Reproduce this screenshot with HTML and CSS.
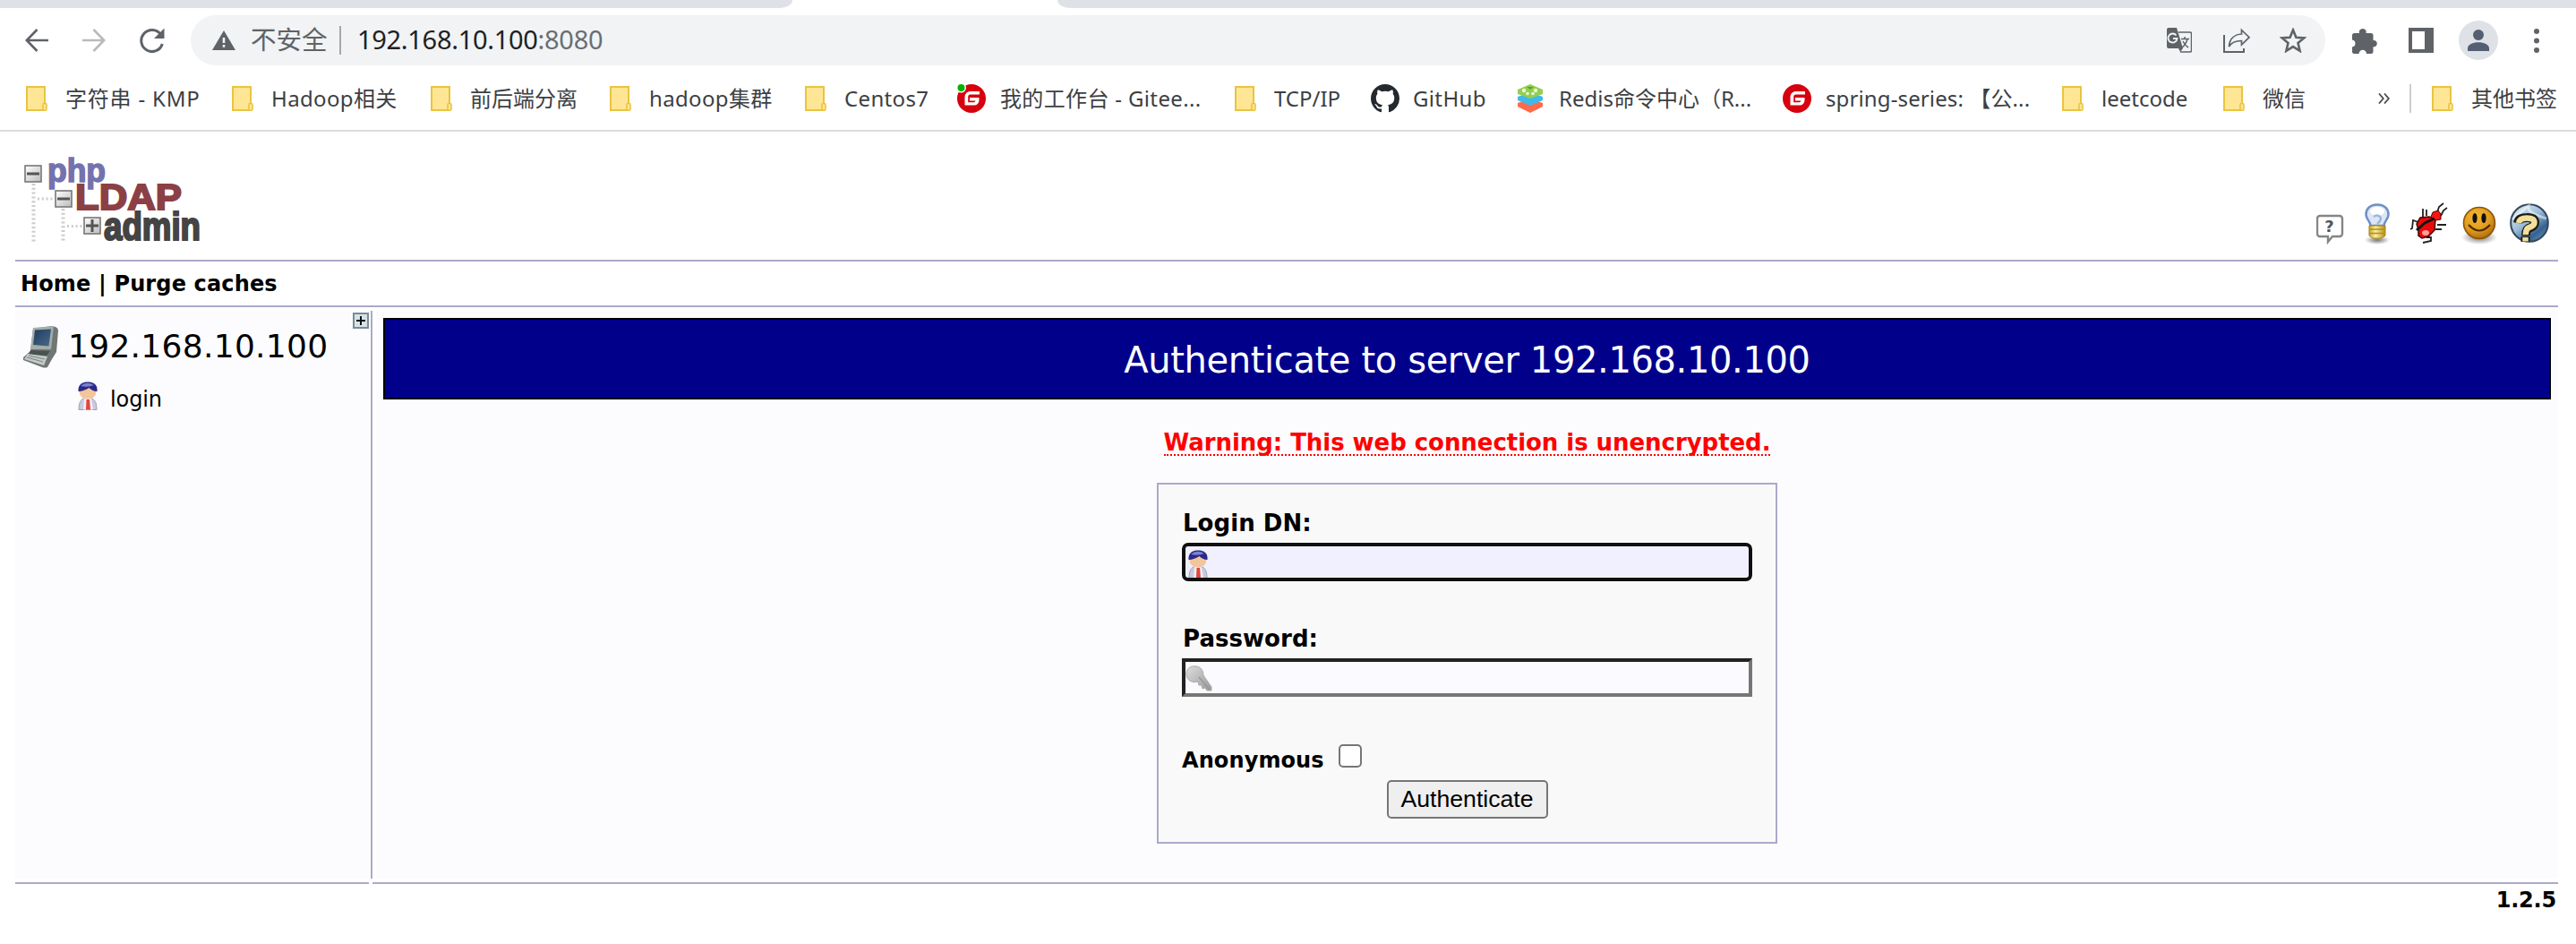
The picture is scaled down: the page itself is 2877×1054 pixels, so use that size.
FILE: index.html
```
<!DOCTYPE html>
<html lang="zh-CN">
<head>
<meta charset="utf-8">
<title>phpLDAPadmin</title>
<link rel="stylesheet" href="styles.css">
</head>
<body>
<svg class="defs" width="0" height="0">
  <defs>
    <symbol id="folder" viewBox="0 0 24 28">
      <path d="M1 1h20v26H1z" fill="#ffe694" stroke="#e9c442" stroke-width="2"/>
      <rect x="19" y="19.500" width="4" height="7.700" rx="1.500" fill="#ffe694" stroke="#e9c442" stroke-width="1.600"/>
    </symbol>
    <symbol id="gitee" viewBox="0 0 32 32">
      <circle cx="16" cy="16" r="16" fill="#d7000f"/>
      <path d="M25 8H14.500A6 6 0 0 0 8.500 14v9.500H19a5.500 5.500 0 0 0 5.500-5.500v-3H14v3.500h6.500a2 2 0 0 1-2 1.700h-6.300V14a2.500 2.500 0 0 1 2.500-2.500H25z" fill="#fff"/>
    </symbol>
    <symbol id="user" viewBox="0 0 24 34">
      <path d="M2 32.500c0-8 2-12 7-13h6c5 1 7 5 7 13z" fill="#c9c9dc" stroke="#a0a0b4"/>
      <path d="M8 20h8l2 12.500H7z" fill="#eeeef6"/>
      <path d="M10.500 21H14l1 11.500h-5z" fill="#e4443b"/>
      <ellipse cx="12" cy="12.500" rx="9.500" ry="8" fill="#f3c59b"/>
      <path d="M1.500 12C1 4 6 1.500 12 1.500S23.500 4 22.500 12c-4 0-7-2-9-4-3 2-8 4-12 4z" fill="#29298c"/>
      <path d="M4 6q6-6 15-1-7 3-15 1z" fill="#7d82cd"/>
    </symbol>
    <linearGradient id="box" x1="0" y1="0" x2="1" y2="1"><stop offset="0" stop-color="#fff"/><stop offset="1" stop-color="#bbb"/></linearGradient>
    <linearGradient id="screen" x1="0" y1="0" x2="1" y2="1"><stop offset="0" stop-color="#213c5c"/><stop offset="1" stop-color="#48698c"/></linearGradient>
    <radialGradient id="face" cx=".4" cy=".3" r=".75"><stop offset="0" stop-color="#f7b52e"/><stop offset=".6" stop-color="#e09a1e"/><stop offset="1" stop-color="#a8660a"/></radialGradient>
    <linearGradient id="globe" x1=".1" y1="0" x2=".9" y2="1"><stop offset="0" stop-color="#e4eef6"/><stop offset=".45" stop-color="#9dbdd8"/><stop offset=".75" stop-color="#34618f"/><stop offset="1" stop-color="#6c98c0"/></linearGradient>
    <linearGradient id="gold" x1="0" y1="0" x2="1" y2="0"><stop offset="0" stop-color="#c9a52a"/><stop offset=".4" stop-color="#fdf0a0"/><stop offset="1" stop-color="#b58e17"/></linearGradient>
    <radialGradient id="shade"><stop offset="0" stop-color="#777"/><stop offset="1" stop-color="#777" stop-opacity="0"/></radialGradient>
    <linearGradient id="steel" x1="0" y1="0" x2="1" y2="1"><stop offset="0" stop-color="#ddd"/><stop offset="1" stop-color="#999"/></linearGradient>
  </defs>
</svg>

<div class="browser">
  <div class="tabstrip"><span class="tabs-left"></span><span class="tabs-right"></span></div>
  <div class="toolbar">
    <div class="nav">
      <svg width="26" height="26" viewBox="0 0 26 26" fill="none" stroke="#5f6368" stroke-width="2.600"><path d="M26 13H2M13.500 1L1.800 13l11.700 12"/></svg>
      <svg width="26" height="26" viewBox="0 0 26 26" fill="none" stroke="#bababc" stroke-width="2.600"><path d="M0 13h24M12.500 1l11.700 12-11.700 12"/></svg>
      <svg width="28" height="28" viewBox="0 0 28 28"><path d="M23.500 7.500A12 12 0 1 0 25.300 18" fill="none" stroke="#5f6368" stroke-width="3"/><path d="M27.500 .5v11.500H16z" fill="#5f6368"/></svg>
    </div>
    <div class="omnibox">
      <svg class="warn" width="26" height="22" viewBox="0 0 26 22"><path d="M13 0l13 22H0z" fill="#5f6368"/><path d="M11.700 8h2.600v6h-2.600zM11.700 16h2.600v2.800h-2.600z" fill="#f1f3f4"/></svg>
      <span class="insecure">不安全</span>
      <span class="divider"></span>
      <span class="url">192.168.10.100<span class="port">:8080</span></span>
      <div class="actions">
        <svg width="28" height="28" viewBox="0 0 28 28"><path d="M13 5h13a1.500 1.500 0 0 1 1.500 1.500v19A1.500 1.500 0 0 1 26 27H15" fill="none" stroke="#5f6368" stroke-width="1.500"/><path d="M2 0h9l7 23-3 4-2-4H2a2 2 0 0 1-2-2V2a2 2 0 0 1 2-2z" fill="#5f6368"/><path d="M10.500 8.500A5 5 0 1 0 11.500 12H7" fill="none" stroke="#f1f3f4" stroke-width="1.900"/><path d="M16 12.500h9M20 10v2.500M23 12.500q-1.500 6-6 9.500M18 15q2 4.500 6 7" fill="none" stroke="#5f6368" stroke-width="1.500"/></svg>
        <svg width="30" height="28" viewBox="0 0 30 28" fill="none" stroke="#5f6368"><path d="M1 8v19h22v-4" stroke-width="2"/><path d="M20.500 2.500L29 10.700 20.500 19v-4.500C14 14.500 9 16.500 6.500 21 7 13 12 7.500 20.500 7z" stroke-width="1.700"/></svg>
        <svg width="30" height="28" viewBox="0 0 30 28"><path d="M15 2.500l3.400 8.200 8.900.7-6.800 5.700 2.100 8.700L15 21.100l-7.600 4.700 2.100-8.700-6.800-5.700 8.900-.7z" fill="none" stroke="#5f6368" stroke-width="2.600"/></svg>
      </div>
    </div>
    <div class="tools">
      <svg width="29" height="29" viewBox="0 0 29 29" fill="#5f6368"><path d="M2.500 6H8a4 3.800 0 1 1 7.500 0H21a2.500 2.500 0 0 1 2.500 2.500V14a3.700 3.700 0 1 1 0 7.300v5.200A2.500 2.500 0 0 1 21 29h-5a4.200 4.200 0 0 0-8.400 0H2.500A2.500 2.500 0 0 1 0 26.500v-5a4.100 4.100 0 0 0 0-8.100V8.500A2.500 2.500 0 0 1 2.500 6z"/></svg>
      <svg width="28" height="28" viewBox="0 0 28 28"><path d="M0 0h28v28H0z" fill="#5f6368"/><path d="M4 4h14v20H4z" fill="#fff"/></svg>
      <svg width="44" height="44" viewBox="0 0 44 44"><circle cx="22" cy="22" r="22" fill="#dee1e6"/><circle cx="22" cy="16" r="6" fill="#555f73"/><path d="M10 34v-3c0-9 24-9 24 0v3z" fill="#555f73"/></svg>
      <svg width="6" height="27" viewBox="0 0 6 27" fill="#5f6368"><circle cx="3" cy="3" r="3"/><circle cx="3" cy="13.500" r="3"/><circle cx="3" cy="24" r="3"/></svg>
    </div>
  </div>
  <div class="bookmarks">
    <div class="mark f"><svg width="24" height="28"><use href="#folder"/></svg><span class="s7">字符串 - KMP</span></div>
    <div class="mark f"><svg width="24" height="28"><use href="#folder"/></svg><span class="s3">Hadoop相关</span></div>
    <div class="mark f"><svg width="24" height="28"><use href="#folder"/></svg><span>前后端分离</span></div>
    <div class="mark f"><svg width="24" height="28"><use href="#folder"/></svg><span class="s3">hadoop集群</span></div>
    <div class="mark f"><svg width="24" height="28"><use href="#folder"/></svg><span class="s3">Centos7</span></div>
    <div class="mark"><svg width="32" height="32"><use href="#gitee"/><circle cx="4.500" cy="4" r="5.500" fill="#fff"/><circle cx="4.500" cy="4" r="4" fill="#00b400"/></svg><span class="s3">我的工作台 - Gitee...</span></div>
    <div class="mark f"><svg width="24" height="28"><use href="#folder"/></svg><span>TCP/IP</span></div>
    <div class="mark g"><svg width="32" height="32" viewBox="0 0 16 16"><path fill="#24292f" d="M8 0C3.580 0 0 3.580 0 8c0 3.540 2.290 6.530 5.470 7.590.4.070.55-.17.55-.38 0-.19-.01-.82-.01-1.490-2.010.37-2.530-.49-2.690-.94-.09-.23-.48-.94-.82-1.130-.28-.15-.68-.52-.01-.53.63-.01 1.080.58 1.230.82.72 1.210 1.870.87 2.330.66.070-.52.28-.87.51-1.070-1.780-.2-3.640-.89-3.640-3.950 0-.87.31-1.590.82-2.150-.08-.2-.36-1.020.08-2.120 0 0 .67-.21 2.200.82.64-.18 1.320-.27 2-.27s1.360.09 2 .27c1.530-1.040 2.200-.82 2.200-.82.44 1.100.16 1.920.08 2.120.51.56.82 1.270.82 2.150 0 3.070-1.870 3.750-3.650 3.950.29.25.54.73.54 1.480 0 1.070-.01 1.930-.01 2.200 0 .21.15.46.55.38A8.010 8.010 0 0 0 16 8c0-4.420-3.580-8-8-8z"/></svg><span class="s3">GitHub</span></div>
    <div class="mark r"><svg width="28" height="32" viewBox="0 0 28 32"><path d="M0 21l14-5 14 5v4l-14 7-14-7z" fill="#ff6b4a"/><path d="M0 14l14-5 14 5v4l-14 6-14-6z" fill="#41b8ea"/><path d="M0 6l14-6 14 6v5l-14 5-14-5z" fill="#91cf50"/><g fill="#eaf6d8"><circle cx="7" cy="7" r="2.200"/><circle cx="20" cy="7" r="2.200"/><circle cx="11" cy="10.500" r="1.800"/><circle cx="17" cy="10.500" r="1.800"/></g><path d="M10 3h8l-4 3z" fill="#5ea51e"/></svg><span>Redis命令中心（R...</span></div>
    <div class="mark"><svg width="32" height="32"><use href="#gitee"/></svg><span class="s1">spring-series: 【公...</span></div>
    <div class="mark f"><svg width="24" height="28"><use href="#folder"/></svg><span>leetcode</span></div>
    <div class="mark f"><svg width="24" height="28"><use href="#folder"/></svg><span>微信</span></div>
    <div class="more"><svg width="13" height="12" viewBox="0 0 13 12" fill="none" stroke="#4a4c50" stroke-width="1.800"><path d="M1 .5L5.800 6 1 11.500M7 .5L11.800 6 7 11.500"/></svg></div>
    <div class="sep"></div>
    <div class="mark f"><svg width="24" height="28"><use href="#folder"/></svg><span>其他书签</span></div>
  </div>
</div>

<div class="page">
  <header class="head">
    <svg class="logo" width="200" height="100" viewBox="0 0 200 100">
      <g stroke="#ccc" stroke-width="4" stroke-dasharray="2 2.800" fill="none"><path d="M10.500 32v66M43.500 60v38"/><path d="M15 49h17M48 79.500h17" stroke-width="3"/></g>
      <g fill="url(#box)" stroke="#777" stroke-width="1.600"><rect x="1" y="12" width="18" height="18"/><rect x="35" y="40" width="18" height="18"/><rect x="67" y="70" width="18" height="18"/></g>
      <path d="M3 21h14M37 49h14M69 79h14M76 72v14" stroke="#555" stroke-width="3"/>
      <text x="26" y="30" class="lg php" textLength="65" lengthAdjust="spacingAndGlyphs">php</text>
      <text x="57" y="61" class="lg ldap" textLength="119" lengthAdjust="spacingAndGlyphs">LDAP</text>
      <text x="89" y="95" class="lg admin" textLength="108" lengthAdjust="spacingAndGlyphs">admin</text>
    </svg>
    <div class="links">
      <svg class="i1" width="32" height="34" viewBox="0 0 32 34"><path d="M4 2h22a3 3 0 0 1 3 3v17a3 3 0 0 1-3 3H18l-5 6v-6H4a3 3 0 0 1-3-3V5a3 3 0 0 1 3-3z" fill="#fff" stroke="#858585" stroke-width="2.400"/><text x="14.500" y="19.500" class="q" font-size="18" text-anchor="middle" fill="#555">?</text></svg>
      <svg class="i2" width="28" height="46" viewBox="0 0 28 46"><ellipse cx="14" cy="41" rx="14" ry="5" fill="url(#shade)"/><path d="M14 1.500C5 1.500 1.500 7 1.500 12.500 1.500 18 6 19 6.500 25h15C22 19 26.500 18 26.500 12.500S23 1.500 14 1.500z" fill="#dce6f5" stroke="#6d8fc4" stroke-width="2.500"/><ellipse cx="14" cy="9" rx="8" ry="5" fill="#fff"/><path d="M10 15q4-3 7 0t-3 8" fill="none" stroke="#9db5dc" stroke-width="2.500"/><path d="M5 25h18v11l-4 3H9l-4-3z" fill="url(#gold)" stroke="#a98514"/><path d="M5 29h18M5 33.500h18" stroke="#b5901c" stroke-width="1.500"/></svg>
      <svg class="i3" width="48" height="48" viewBox="0 0 48 48"><g fill="none" stroke="#222" stroke-width="1.800"><path d="M19 18V8M23 16V9M14 23l-6-2-1 9-2 1M35 12l2-6 5-4M39 16l3-6 4-3M35 26h10M33 31h7M23 40h5v4l-9 2"/></g><path d="M16 18l10-1 7 3-1 12-7 7-7 2-4-3v-7l-2-6z" fill="#e60a0a" stroke="#400" stroke-width="1.500"/><path d="M30 12l6-2 3 4v6l-6 1-5-4z" fill="#f51515" stroke="#500" stroke-width="1"/><path d="M12 32L21 24 32 19" stroke="#111" stroke-width="3" fill="none"/><ellipse cx="22" cy="35" rx="4" ry="3" fill="#ff9c9c"/></svg>
      <svg class="i4" width="40" height="44" viewBox="0 0 40 44"><ellipse cx="20" cy="36" rx="20" ry="8" fill="url(#shade)"/><circle cx="20" cy="20" r="17.500" fill="url(#face)" stroke="#8a5508" stroke-width="1.600"/><ellipse cx="15" cy="14.500" rx="2.600" ry="5.500" fill="#111"/><ellipse cx="25" cy="14.500" rx="2.600" ry="5.500" fill="#111"/><path d="M8 22q12 13 24 0" fill="none" stroke="#4d2d00" stroke-width="2.200"/></svg>
      <svg class="i5" width="44" height="46" viewBox="0 0 44 46"><circle cx="22" cy="22" r="20.800" fill="url(#globe)" stroke="#33485c" stroke-width="2"/><path d="M3 18q10-9 18-15-2 8 20 14" fill="none" stroke="#fff" stroke-opacity=".5" stroke-width="3"/><g fill="none" stroke-linejoin="round"><path d="M9 22q1-6 10-6 9-.5 9 5.500 0 4-7 6.500-3 2-3 8M17.500 37v6" stroke="#1c1c1c" stroke-width="10"/><path d="M10 22q1-5.500 9-5.500 8.500 0 8.500 5 0 3.500-7 6-2.800 2-2.800 7.500M17.500 38v4.500" stroke="#f2e09a" stroke-width="6.500"/></g></svg>
    </div>
  </header>
  <nav class="menu">Home | Purge caches</nav>
  <div class="columns">
    <aside class="tree">
      <div class="expand"><svg width="18" height="18" viewBox="0 0 18 18"><path d="M1 1h16v16H1z" fill="#d5e3e6" stroke="#7c8c8f" stroke-width="2"/><path d="M4 9h10M9 4v10" stroke="#111" stroke-width="2"/></svg></div>
      <div class="server">
        <svg width="42" height="48" viewBox="0 0 42 48"><path d="M12 4L33 1q7 1 7 5l-2 24-5 8-5 9q-3 1-6 0L1 39v-3l8-7z" fill="#6f7774"/><path d="M12 3l23-2-3 26-23 0z" fill="#a4ada9"/><path d="M14 5.500l18-1-2.500 19L12 22z" fill="url(#screen)"/><path d="M9 28l22 1-4 5-20-1z" fill="#49524f"/><path d="M6 32l22 3-4 10-22-7z" fill="#c3cbc8"/><path d="M7 34l18 4M5 36l18 5" stroke="#7e8784" stroke-width="1.200"/></svg>
        <span>192.168.10.100</span>
      </div>
      <div class="login"><svg width="24" height="34"><use href="#user"/></svg><span>login</span></div>
    </aside>
    <div class="rule"></div>
    <main class="body">
      <h1>Authenticate to server 192.168.10.100</h1>
      <div class="warning"><span>Warning: This web connection is unencrypted.</span></div>
      <form class="auth">
        <label class="lab">Login DN:</label>
        <div class="field focus"><svg width="24" height="34" viewBox="0 0 24 34"><use href="#user"/></svg></div>
        <label class="lab second">Password:</label>
        <div class="field"><svg width="30" height="29" viewBox="0 0 30 29"><path d="M9 1c6-1 11 3 11 10l9 13v4h-5l-2-3-3 1-1-4-3 0-1-4C7 20 1 16 1 10 1 5 4 1 9 1z" fill="url(#steel)" stroke="#aaa"/><path d="M15 13l12 14" stroke="#999" stroke-width="1.600"/></svg></div>
        <div class="anon"><span>Anonymous</span><i class="check"></i></div>
        <button type="button">Authenticate</button>
      </form>
    </main>
  </div>
  <div class="endrules"><i></i><i></i></div>
  <footer>1.2.5</footer>
</div>
</body>
</html>
```
FILE: styles.css
```
* { box-sizing: border-box; }
body { margin: 0; background: #fff; color: #000; font-family: "DejaVu Sans", sans-serif; font-size: 24px; }
svg { display: block; flex: none; }
.defs { position: absolute; }

/* browser chrome */
.browser { height: 147px; border-bottom: 2px solid #dcdcdc; font-family: "Noto Sans", "Noto Sans CJK SC", sans-serif; }
.tabstrip { height: 9px; display: flex; justify-content: space-between; }
.tabs-left { width: 885px; background: #dee1e6; border-bottom-right-radius: 14px 9px; }
.tabs-right { width: 1696px; background: #dee1e6; border-bottom-left-radius: 14px 9px; }
.toolbar { height: 72px; display: flex; align-items: center; padding-right: 41px; }
.nav { display: flex; gap: 38px; width: 213px; padding-left: 28px; align-items: center; }
.omnibox { width: 2384px; height: 56px; border-radius: 28px; background: #f1f3f4; display: flex; align-items: center; padding: 0 21px 0 24px; line-height: 52px; }
.insecure { margin-left: 17px; width: 99px; padding-bottom: 2px; font-size: 28.500px; color: #5f6368; }
.divider { width: 2px; height: 32px; margin-right: 18px; background: #a5a8ab; }
.url { font-size: 29px; letter-spacing: -.3px; color: #202124; padding-bottom: 2px; }
.port { color: #6a6e73; }
.actions { margin-left: auto; display: flex; gap: 35px; }
.actions svg:nth-child(2) { margin-right: -2px; }
.tools { flex: 1; display: flex; align-items: center; padding-left: 30px; }
.tools svg:nth-child(2) { margin-left: 34px; }
.tools svg:nth-child(3) { margin-left: 28px; }
.tools svg:nth-child(4) { margin-left: auto; }
.bookmarks { height: 57px; padding-left: 29px; display: grid; align-items: center; color: #3c4043; grid-template-columns: 230px 222px 200px 218px 170px 310px 152px 164px 296px 312px 180px 173px 35px 25px auto; }
.mark { display: flex; align-items: center; gap: 16px; white-space: nowrap; line-height: 40px; }
.mark.f { gap: 20px; }
.mark.g { gap: 15px; }
.mark.r { gap: 18px; }
.s7 { letter-spacing: .8px; }
.s3 { letter-spacing: .35px; }
.s1 { letter-spacing: .12px; }
.sep { width: 2px; height: 32px; background: #cbcdd0; }

/* application */
.page { padding: 0 20px 0 17px; }
.head { height: 145px; border-bottom: 2px solid #aaaacc; display: flex; justify-content: space-between; align-items: flex-end; padding: 0 10px 17px 10px; }
.lg { font-family: "Liberation Sans", sans-serif; font-weight: bold; }
.logo { overflow: visible; }
.php { font-size: 36px; fill: #7373ad; stroke: #7373ad; stroke-width: 1.500; }
.ldap { font-size: 41px; fill: #8b4045; stroke: #8b4045; stroke-width: 2; }
.admin { font-size: 44px; fill: #444; stroke: #444; stroke-width: 2.200; }
.q { font-family: "DejaVu Sans", sans-serif; font-weight: bold; }
.links { display: flex; align-items: flex-end; }
.i2 { margin-left: 22px; }
.i3 { margin-left: 18px; }
.i4 { margin-left: 14px; }
.i5 { margin-left: 14px; }
.menu { height: 51px; border-bottom: 2px solid #aaaacc; padding-left: 6px; font-weight: bold; line-height: 51px; letter-spacing: .15px; }
.columns { margin-top: 4px; height: 634px; display: grid; grid-template-columns: 395px 2px 2437px; column-gap: 2px; }
.rule { background: #aaaacc; }
.tree, .body { background: #fcfcfe; }
.body { margin-left: 2px; margin-right: -2px; }
.expand { display: flex; justify-content: flex-end; padding-top: 2px; height: 16px; }
.server { display: flex; align-items: center; gap: 17px; padding-left: 8px; height: 48px; font-size: 36px; letter-spacing: .3px; }
.server svg { margin-right: -8px; }
.server span { padding-bottom: 2px; }
.login { display: flex; align-items: center; gap: 13px; margin-top: 13px; padding-left: 69px; }
.login span { padding-top: 8px; letter-spacing: -.1px; }
.body { padding: 8px 8px 0; }
h1 { margin: 0; height: 91px; border: 2px solid #000; background: #00008b; color: #fff; text-align: center; font-size: 40px; font-weight: normal; line-height: 91px; letter-spacing: -.38px; }
.warning { text-align: center; height: 93px; padding-top: 34px; font-size: 26px; font-weight: bold; color: #f00; line-height: 29px; letter-spacing: -.05px; }
.warning span { display: inline-block; height: 29px; border-bottom: 2px dotted #f00; }
.auth { position: relative; width: 693px; height: 403px; margin: 0 auto; padding: 25px 26px 0; border: 2px solid #aaaacc; background: #f9f9f9; display: flex; flex-direction: column; }
.lab { font-size: 26px; font-weight: bold; line-height: 36px; height: 40px; letter-spacing: .05px; padding-left: 1px; }
.field { height: 43px; width: 637px; border: 4px solid; border-color: #222 #767676 #767676 #222; background: #fafaff; padding-top: 4px; overflow: hidden; }
.field.focus { border-color: #101010; border-radius: 7px; background: #f0f0ff; box-shadow: 0 0 0 1px #fff; padding: 3px 2px 0; }
.lab.second { margin-top: 46px; }
.anon { display: flex; margin-top: 52px; height: 41px; font-weight: bold; line-height: 38px; letter-spacing: .1px; }
.check { width: 26px; height: 26px; margin: 1px 0 0 16px; border: 2px solid #767676; border-radius: 5px; background: #fff; }
button { align-self: center; width: 180px; height: 43px; padding: 0; border: 2px solid #767676; border-radius: 5px; background: #efefef; color: #000; font: 26.670px/37px "Liberation Sans", sans-serif; }
.endrules { margin-top: 4px; height: 2px; display: grid; grid-template-columns: 395px 1fr; column-gap: 4px; }
.endrules i { background: #aaaacc; }
footer { text-align: right; padding: 0 2px 0 0; font-weight: bold; line-height: 36px; letter-spacing: -.2px; }
```
